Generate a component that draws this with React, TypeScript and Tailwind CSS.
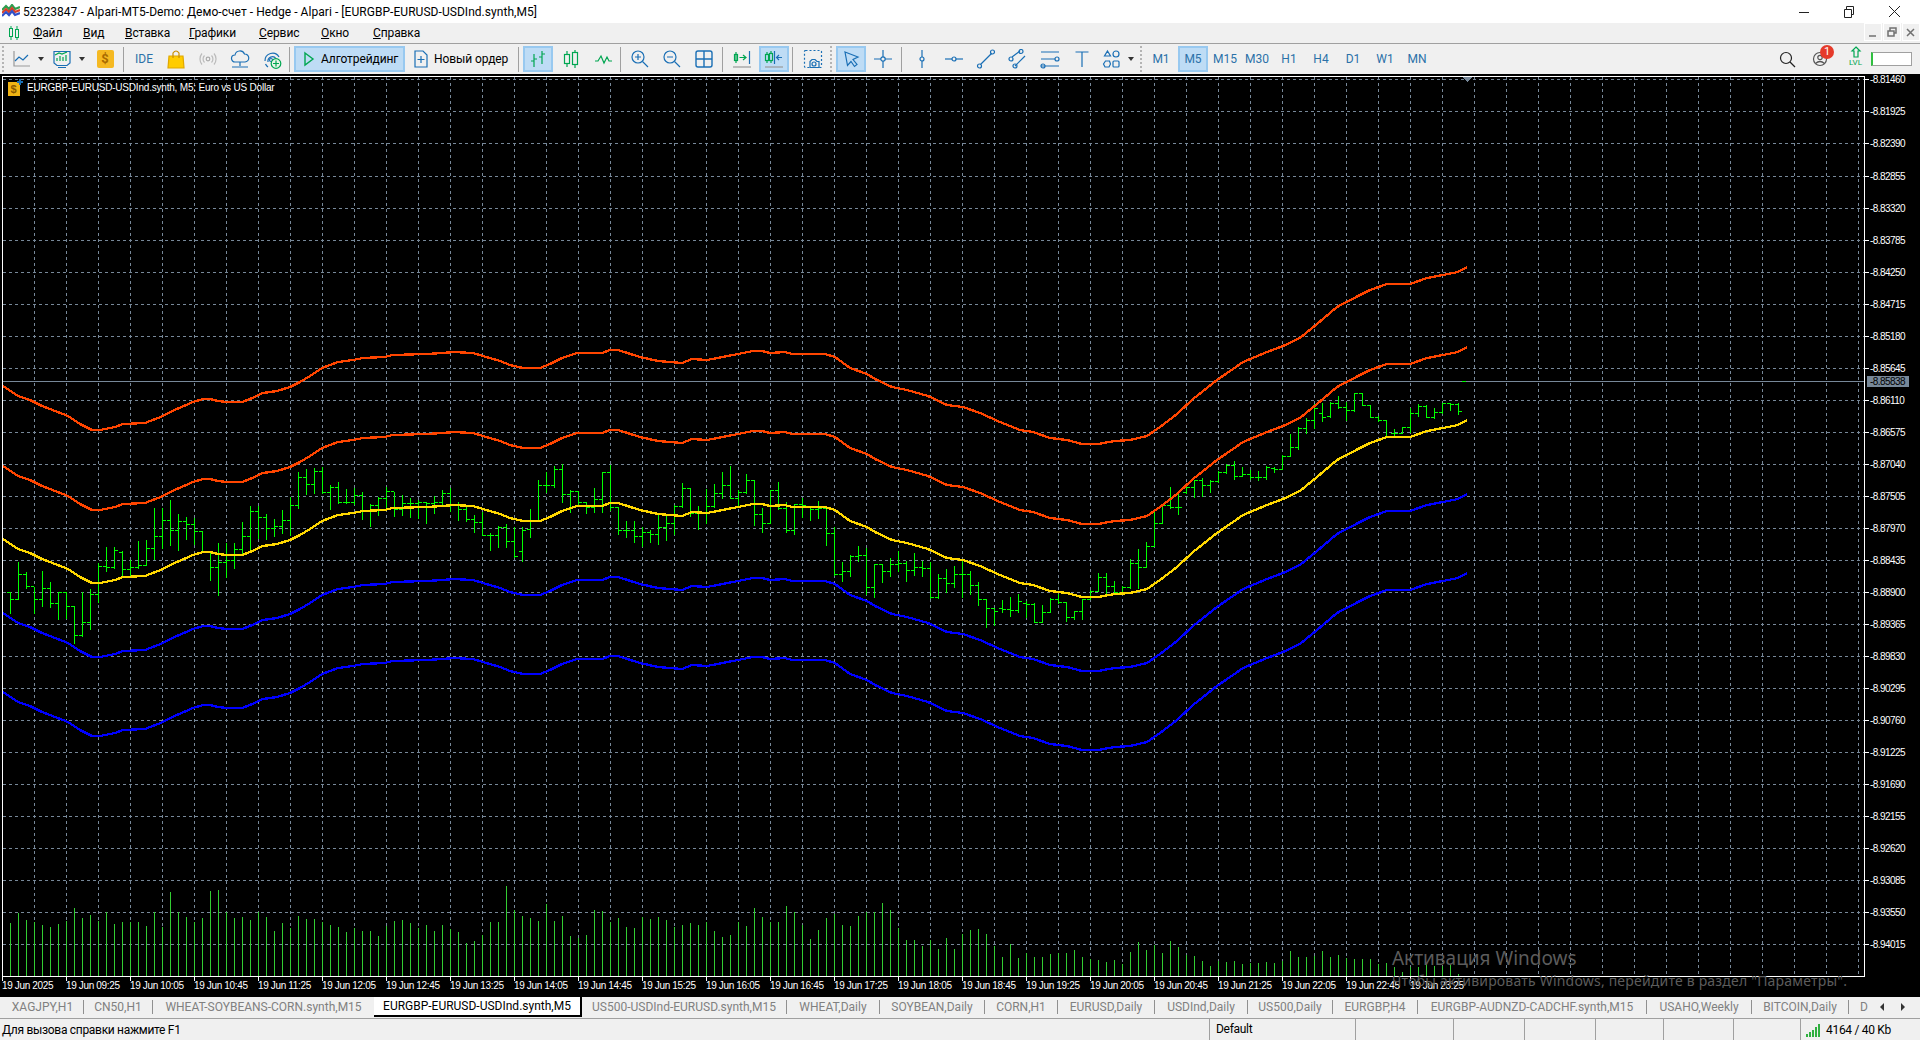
import type { ReactNode } from "react";

// y0 + raw/3: values were read off 3x crops of the chart
type Row = [number, number, number, number];
const seg = (y0: number, rows: Row[]) => rows.map((r) => r.map((v) => y0 + v / 3));

const BARS = [
  ...seg(360, [
    [697, 758, 697, 718], [606, 718, 718, 642], [636, 685, 642, 678], [680, 760, 678, 718], [633, 737, 718, 685],
    [666, 740, 685, 730], [695, 778, 730, 695], [695, 775, 695, 738], [738, 850, 738, 826], [697, 828, 826, 786],
    [688, 808, 786, 703], [610, 725, 703, 617], [561, 632, 617, 622], [561, 623, 622, 570], [574, 650, 577, 627],
    [601, 648, 627, 622], [543, 625, 622, 614], [541, 616, 614, 565], [444, 598, 565, 528], [445, 565, 528, 481],
    [420, 556, 481, 510], [462, 569, 510, 484], [471, 538, 484, 493], [474, 551, 493, 513], [513, 575, 513, 575],
    [575, 660, 575, 622], [549, 705, 622, 605], [548, 650, 605, 600], [549, 624, 600, 568], [487, 582, 568, 528],
    [437, 571, 528, 452], [438, 535, 452, 470], [462, 537, 470, 503], [477, 528, 503, 497], [450, 518, 497, 481],
    [410, 525, 481, 434], [335, 444, 434, 350], [327, 403, 350, 372], [325, 400, 372, 332], [322, 400, 332, 397],
    [376, 447, 397, 381], [366, 430, 381, 427], [388, 430, 427, 425], [385, 432, 425, 405], [397, 476, 405, 451],
    [433, 498, 451, 436], [412, 465, 436, 415], [380, 445, 415, 394], [395, 467, 394, 448], [405, 465, 448, 430],
    [414, 471, 430, 429], [421, 475, 429, 425], [425, 489, 425, 430], [408, 459, 430, 426], [391, 437, 426, 398],
    [384, 452, 398, 432], [427, 480, 432, 448], [436, 484, 448, 478], [465, 516, 478, 487], [456, 526, 487, 525],
    [518, 570, 525, 525], [498, 560, 525, 500],
  ]),
  ...seg(330, [
    [582, 650, 590, 632], [590, 680, 632, 677], [590, 693, 663, 600], [538, 620, 598, 571], [450, 572, 571, 464],
    [427, 487, 464, 464], [408, 472, 464, 418], [403, 515, 418, 492], [481, 545, 492, 484], [482, 525, 484, 515],
    [515, 550, 515, 530], [475, 545, 530, 508], [427, 545, 508, 427], [405, 540, 427, 532], [530, 612, 532, 600],
    [574, 620, 600, 600], [573, 635, 600, 617], [590, 648, 617, 605], [600, 635, 605, 613], [555, 643, 613, 592],
    [558, 630, 592, 580], [525, 612, 580, 528], [460, 530, 528, 473], [473, 558, 473, 548], [529, 598, 548, 548],
    [478, 578, 548, 528], [462, 530, 528, 490], [427, 503, 490, 465], [408, 505, 465, 505], [480, 530, 505, 485],
    [432, 490, 485, 450], [450, 585, 450, 552], [535, 607, 552, 580], [481, 580, 580, 481], [457, 537, 481, 533],
    [515, 605, 533, 600], [522, 613, 600, 523], [505, 560, 523, 525], [530, 570, 530, 538], [513, 565, 538, 535],
    [532, 645, 535, 608], [590, 735, 608, 733], [695, 752, 733, 724], [675, 737, 724, 677], [648, 692, 677, 674],
    [655, 793, 674, 771], [703, 800, 771, 703], [703, 755, 703, 724], [685, 738, 724, 702], [662, 723, 702, 700],
    [692, 752, 700, 720], [670, 735, 720, 710], [692, 737, 710, 715], [696, 803, 715, 800], [732, 803, 800, 745],
    [717, 787, 745, 760], [708, 772, 760, 733], [692, 800, 733, 733], [723, 793, 733, 765], [755, 825, 765, 808],
    [808, 890, 808, 834], [835, 885, 834, 842],
  ]),
  ...seg(250, [
    [1050, 1085, 1075, 1078], [1042, 1097, 1078, 1080], [1032, 1085, 1080, 1052], [1052, 1100, 1058, 1062],
    [1060, 1117, 1062, 1117], [1065, 1117, 1117, 1087], [1045, 1087, 1087, 1047], [1033, 1060, 1047, 1055],
    [1055, 1113, 1055, 1102], [1082, 1108, 1102, 1083], [1047, 1108, 1083, 1048], [1020, 1048, 1048, 1022],
    [970, 1022, 1022, 982], [970, 1030, 982, 1008], [992, 1030, 1008, 1025], [1008, 1030, 1025, 1010],
    [928, 1013, 1010, 940], [897, 1015, 940, 952], [877, 952, 952, 888], [785, 888, 888, 820], [765, 820, 820, 765],
    [712, 775, 765, 770], [725, 792, 770, 770], [710, 730, 725, 712], [690, 740, 712, 690], [685, 738, 690, 705],
    [690, 725, 705, 692], [663, 695, 692, 665], [642, 668, 665, 645], [633, 688, 645, 677], [652, 678, 677, 673],
    [660, 688, 673, 680], [662, 690, 680, 680], [647, 688, 680, 650], [650, 665, 655, 658], [615, 658, 658, 617],
    [552, 617, 617, 592], [532, 597, 592, 533], [505, 550, 533, 510], [462, 533, 510, 475], [458, 513, 490, 500],
    [455, 502, 498, 460], [438, 473, 460, 470], [455, 510, 470, 480], [430, 482, 480, 430], [430, 465, 430, 465],
    [465, 502, 465, 502], [498, 512, 502, 510], [511, 560, 510, 560], [537, 555, 550, 550], [530, 550, 550, 532],
    [475, 545, 532, 490], [462, 497, 490, 468], [465, 502, 468, 502], [475, 503, 502, 487], [460, 490, 487, 460],
    [460, 480, 460, 462], [460, 493, 462, 482],
  ]),
];

const VOL_A = [
  128, 98, 120, 125, 135, 140, 132, 122, 84, 113, 105, 122, 96, 132, 126, 126, 126, 138, 97, 140, 36, 96, 110, 126,
  113, 33, 30, 96, 113, 110, 120, 96, 110, 153, 129, 144, 108, 117, 117, 126, 135, 141, 156, 144, 153, 153, 168, 138,
  123, 120, 129, 144, 135, 153, 135, 147, 156, 190, 184, 165, 126, 126, 18, 90, 108, 114, 123, 72, 123, 108, 168, 174,
  165, 90, 93, 126, 114, 141, 144, 111, 117, 111, 120, 141, 135, 130, 135,
];
const VOL_B = [
  127, 152, 170, 165, 125, 137, 84, 110, 125, 125, 78, 97, 135, 177, 150, 113, 102, 135, 138, 108, 97, 96, 68, 90, 145,
  180, 180, 197, 180, 207, 175, 207, 162, 150, 147, 162, 198, 232, 192, 235, 220, 232, 232, 222, 220, 218, 210, 232,
  238, 240, 245, 240, 252, 215, 187, 210, 195, 218, 182, 200, 225, 228, 242, 258, 244, 246, 244, 252, 250, 250, 246,
  248, 244, 212, 232, 232, 228, 212, 232, 226, 235, 236, 238, 236, 252, 248, 262, 275, 262, 260, 250, 258, 258, 255,
  282,
];

// middle line of the envelopes, the other four are constant offsets from it
const MID: [number, number][] = [
  [3, 539], [18, 549], [30, 553], [42, 559], [55, 564], [68, 569], [80, 577], [92, 583], [100, 583], [115, 580],
  [123, 577], [145, 576], [163, 569], [170, 565], [193, 555], [203, 552], [210, 552], [218, 554], [227, 555],
  [242, 555], [250, 552], [263, 546], [277, 544], [290, 540], [300, 535], [310, 529], [322, 521], [338, 515],
  [353, 513], [363, 511], [385, 510], [392, 508], [427, 507], [443, 506], [453, 505], [473, 506], [483, 509],
  [500, 514], [510, 518], [523, 521], [540, 521], [550, 517], [562, 511], [577, 506], [602, 506], [610, 503],
  [618, 503], [640, 510], [658, 514], [682, 516], [692, 512], [707, 513], [733, 508], [753, 504], [762, 504],
  [770, 506], [785, 505], [792, 507], [825, 507], [835, 510], [850, 521], [867, 527], [875, 532], [892, 540],
  [907, 543], [928, 549], [947, 558], [963, 560], [980, 566], [1000, 575], [1020, 583], [1033, 585], [1050, 591],
  [1067, 593], [1082, 597], [1098, 597], [1115, 594], [1130, 593], [1147, 589], [1160, 580], [1177, 567], [1193, 552],
  [1217, 533], [1233, 522], [1243, 515], [1267, 505], [1283, 499], [1300, 491], [1317, 477], [1337, 460], [1358, 449],
  [1370, 443], [1387, 437], [1410, 437], [1427, 431], [1443, 428], [1458, 425], [1467, 420],
];

const LINES = [
  { off: -153, color: "#ff4500" },
  { off: -73, color: "#ff4500" },
  { off: 0, color: "#ffd700" },
  { off: 74, color: "#0000ff" },
  { off: 153, color: "#0000ff" },
];

const GRID_Y = [
  79, 111, 143, 176, 208, 240, 272, 304, 336, 368, 400, 432, 464, 496, 528, 560, 592, 624, 656, 688, 720, 752, 784, 816,
  848, 880, 912, 944,
];
const PRICES = [
  "8.81460", "8.81925", "8.82390", "8.82855", "8.83320", "8.83785", "8.84250", "8.84715", "8.85180", "8.85645",
  "8.86110", "8.86575", "8.87040", "8.87505", "8.87970", "8.88435", "8.88900", "8.89365", "8.89830", "8.90295",
  "8.90760", "8.91225", "8.91690", "8.92155", "8.92620", "8.93085", "8.93550", "8.94015",
];
const TIMES = [
  "2025", "09:25", "10:05", "10:45", "11:25", "12:05", "12:45", "13:25", "14:05", "14:45", "15:25", "16:05", "16:45",
  "17:25", "18:05", "18:45", "19:25", "20:05", "20:45", "21:25", "22:05", "22:45", "23:25",
];

const TABS = [
  { name: "XAGJPY,H1", w: "w-[82px]" },
  { name: "CN50,H1", w: "w-[69px]" },
  { name: "WHEAT-SOYBEANS-CORN.synth,M15", w: "w-[221px]" },
  { name: "EURGBP-EURUSD-USDInd.synth,M5", w: "w-[208px]", active: true },
  { name: "US500-USDInd-EURUSD.synth,M15", w: "w-[205px]" },
  { name: "WHEAT,Daily", w: "w-[93px]" },
  { name: "SOYBEAN,Daily", w: "w-[105px]" },
  { name: "CORN,H1", w: "w-[73px]" },
  { name: "EURUSD,Daily", w: "w-[97px]" },
  { name: "USDInd,Daily", w: "w-[93px]" },
  { name: "US500,Daily", w: "w-[85px]" },
  { name: "EURGBP,H4", w: "w-[85px]" },
  { name: "EURGBP-AUDNZD-CADCHF.synth,M15", w: "w-[229px]" },
  { name: "USAHO,Weekly", w: "w-[105px]" },
  { name: "BITCOIN,Daily", w: "w-[96px]" },
];

function Chart() {
  const bars = BARS.map((b, i) => {
    const x = 10 + 8 * i;
    const [h, l, o, c] = b.map(Math.round);
    return `M${x + 0.5} ${h}V${l + 1}M${x - 3} ${o + 0.5}H${x}M${x + 1} ${c + 0.5}H${x + 4}`;
  }).join("");
  const vols = [...VOL_A.map((t, i) => [i, t]), ...VOL_B.map((t, i) => [i + 87, t])]
    .map(([k, t]) => `M${10 + 8 * k + 0.5} ${Math.round(880 + t / 3)}V976`)
    .join("");

  return (
    <svg className="block" width={1920} height={923} viewBox="0 74 1920 923" shapeRendering="crispEdges">
      {/* grid */}
      <g stroke="#778899" strokeDasharray="3 3">
        {GRID_Y.map((y) => (
          <line key={y} x1={3} x2={1864} y1={y + 0.5} y2={y + 0.5} />
        ))}
        {Array.from({ length: 58 }, (_, i) => (
          <line key={i} x1={34.5 + 32 * i} x2={34.5 + 32 * i} y1={77} y2={976} />
        ))}
      </g>
      <path d={vols} stroke="#32cd32" fill="none" />
      <path d={bars} stroke="#00ff00" fill="none" />
      <line x1={3} x2={1864} y1={381.5} y2={381.5} stroke="#778899" />
      <line x1={1462} x2={1466} y1={381.5} y2={381.5} stroke="#00ff00" />
      {LINES.map((l) => (
        <polyline
          key={l.off}
          points={MID.map(([x, y]) => `${x},${y + l.off}`).join(" ")}
          fill="none"
          stroke={l.color}
          strokeWidth={2.3}
        />
      ))}
      <polygon points="1462,77 1472,77 1467,82" fill="#778899" />

      {/* frame and axes */}
      <path d="M2.5 76V977M2 76.5H1865M1864.5 76V977M2 976.5H1865" stroke="#fff" fill="none" />
      <g stroke="#fff">
        {GRID_Y.map((y) => (
          <line key={y} x1={1865} x2={1869} y1={y + 0.5} y2={y + 0.5} />
        ))}
        {TIMES.map((_, i) => (
          <line key={i} x1={2.5 + 64 * i} x2={2.5 + 64 * i} y1={977} y2={981} />
        ))}
      </g>
      <g fill="#fff" fontFamily="Liberation Sans, sans-serif" fontSize={10} shapeRendering="auto">
        {PRICES.map((p, i) => (
          <text key={p} x={1870} y={GRID_Y[i] + 4} letterSpacing={-0.55}>
            {"-" + p}
          </text>
        ))}
        {TIMES.map((t, i) => (
          <text key={t} x={2 + 64 * i} y={989} letterSpacing={-0.35}>
            {"19 Jun " + t}
          </text>
        ))}
        <text x={27} y={91} letterSpacing={-0.2}>
          EURGBP-EURUSD-USDInd.synth, M5: Euro vs US Dollar
        </text>
      </g>
      <rect x={1867} y={376} width={42} height={11} fill="#778899" />
      <text x={1870} y={385} fontFamily="Liberation Sans, sans-serif" fontSize={10} letterSpacing={-0.55} shapeRendering="auto">
        -8.85838
      </text>

      {/* chart window icon */}
      <rect x={8} y={82} width={12} height={14} rx={1} fill="#f0b414" />
      <text x={10.5} y={93} fontSize={11} fontFamily="Liberation Sans, sans-serif" fontWeight={700} fill="#8a5a00" shapeRendering="auto">
        $
      </text>
      <path d="M20 79v6M17 82h6" stroke="#1a6fb5" strokeWidth={1.5} />
    </svg>
  );
}

const Ico = ({ children, w = 20, h = 20 }: { children: ReactNode; w?: number; h?: number }) => (
  <svg width={w} height={h} viewBox={`0 0 ${w} ${h}`} fill="none" stroke="#1a6fb5" strokeWidth={1.2}>
    {children}
  </svg>
);

const Slot = ({
  children,
  active,
  w = "w-[32px]",
  className = "",
}: {
  children?: ReactNode;
  active?: boolean;
  w?: string;
  className?: string;
}) => (
  <div className={`flex h-[26px] shrink-0 items-center justify-center ${w} ${className}`}>
    {active ? (
      <div className="flex h-[26px] w-[30px] items-center justify-center border-2 border-[#98c9f0] bg-[#bedcf5]">{children}</div>
    ) : (
      children
    )}
  </div>
);

const Sep = ({ className = "" }: { className?: string }) => <div className={`h-[25px] w-px shrink-0 bg-[#a0a0a0] ${className}`} />;
const Grip = ({ className = "" }: { className?: string }) => (
  <div className={`h-[26px] w-[3px] shrink-0 border-l-2 border-dotted border-[#b4b4b4] ${className}`} />
);
const Caret = ({ className = "w-[8px]" }: { className?: string }) => (
  <div className={`flex shrink-0 justify-center ${className}`}>
    <div className="h-0 w-0 border-x-[3.5px] border-t-[4px] border-x-transparent border-t-[#333]" />
  </div>
);
const Tf = ({ label, active }: { label: string; active?: boolean }) => (
  <Slot active={active}>
    <span className="text-[12px] text-[#2b71a8]">{label}</span>
  </Slot>
);

function Toolbar() {
  return (
    <div className="flex h-[30px] items-center bg-[#f0f0f0] pl-[2px]">
      <Grip />
      <Slot w="w-[30px]" className="ml-[2px]">
        <Ico>
          <path d="M2 2v15h16" stroke="#999" />
          <path d="M3 12l4-4 4 3 5-5" />
        </Ico>
      </Slot>
      <Caret />
      <Slot w="w-[30px]" className="ml-[2px]">
        <Ico>
          <path d="M2 2.5h16v11.5l-3 2.5H5l-3-2.5zM6 18.5h8" />
          <path d="M5 12V9M8 12V7M11 12V8M14 12V6M3 6l4-2 3 1 5-2" stroke="#00a651" />
        </Ico>
      </Slot>
      <Caret className="w-[9px]" />
      <Slot className="ml-[3px]">
        <div className="flex h-[18px] w-[17px] items-center justify-center rounded-[2px] bg-[#f5b922] text-[13px] font-bold text-[#a86a00]">$</div>
      </Slot>
      <Sep className="ml-[2px]" />
      <Slot className="ml-[4px]">
        <span className="text-[12px] text-[#2b71a8]">IDE</span>
      </Slot>
      <Slot>
        <Ico>
          <path d="M3 7h14l1 12H2z" fill="#ffcc00" stroke="#e0a800" />
          <path d="M7 9V4q3-4 6 0v5" stroke="#c98f00" />
        </Ico>
      </Slot>
      <Slot>
        <Ico>
          <circle cx={10} cy={10} r={1.8} stroke="#aaa" />
          <path d="M6.5 6.5a5 5 0 0 0 0 7M13.5 6.5a5 5 0 0 1 0 7M4 4.5a8.5 8.5 0 0 0 0 11M16 4.5a8.5 8.5 0 0 1 0 11" stroke="#bbb" />
        </Ico>
      </Slot>
      <Slot>
        <Ico>
          <path d="M5 13a3.5 3.5 0 0 1 0-7 5 5 0 0 1 9.500-1 4 4 0 0 1 .5 8zM10 13v4M2 18h16" />
        </Ico>
      </Slot>
      <Slot>
        <Ico>
          <path d="M3 12a7.500 7.500 0 0 1 14-4M6 13a4.500 4.500 0 0 1 8-3.500M3.500 15q1 2 2.500 3" />
          <circle cx={9} cy={11} r={1.5} />
          <circle cx={14} cy={14.5} r={4.8} fill="#e8f5e8" stroke="#00a651" />
          <path d="M14 11.500v6M11 14.500h6" stroke="#00a651" />
        </Ico>
      </Slot>
      <Sep className="ml-px" />
      <div className="ml-[4px] flex h-[26px] w-[111px] shrink-0 items-center border-2 border-[#98c9f0] bg-[#bedcf5] pl-[7px]">
        <Ico w={12} h={16}>
          <path d="M2 2l8 6-8 6z" stroke="#00a651" strokeWidth={1.4} />
        </Ico>
        <span className="ml-[6px] text-[12px] tracking-[-0.1px] text-black">Алготрейдинг</span>
      </div>
      <div className="ml-[2px] flex h-[26px] w-[108px] shrink-0 items-center pl-[7px]">
        <Ico w={14} h={18}>
          <path d="M1 1h8l4 4v12H1z" />
          <path d="M7 6v7M3.500 9.500h7" />
        </Ico>
        <span className="ml-[6px] text-[12px] tracking-[-0.1px] text-black">Новый ордер</span>
      </div>
      <Sep className="ml-[3px]" />
      <Slot active w="w-[30px]" className="ml-[4px]">
        <Ico>
          <path d="M6 5v13M3 12h3M6 10h3M14 2v13M11 8h3M14 5h3" stroke="#00a651" />
        </Ico>
      </Slot>
      <Slot className="ml-[2px]">
        <Ico>
          <path d="M6 2v16M14 1v18" stroke="#00a651" />
          <rect x={3.500} y={5.500} width={5} height={9} fill="#f0f0f0" stroke="#00a651" />
          <rect x={11.500} y={3.500} width={5} height={12} fill="#f0f0f0" stroke="#00a651" />
        </Ico>
      </Slot>
      <Slot>
        <Ico>
          <path d="M2 12h3l3-5 3 7 3-6 2 4h3" stroke="#00a651" />
        </Ico>
      </Slot>
      <Sep className="ml-px" />
      <Slot className="ml-[3px]">
        <Ico>
          <circle cx={8} cy={8} r={6} />
          <path d="M12.500 12.500l5.500 5.500M5 8h6M8 5v6" />
        </Ico>
      </Slot>
      <Slot>
        <Ico>
          <circle cx={8} cy={8} r={6} />
          <path d="M12.500 12.500l5.500 5.500M5 8h6" />
        </Ico>
      </Slot>
      <Slot>
        <Ico>
          <rect x={2} y={2} width={16} height={16} rx={2} strokeWidth={1.4} />
          <path d="M10 2v16M2 10h16" strokeWidth={1.4} />
        </Ico>
      </Slot>
      <Sep className="ml-[2px]" />
      <Slot className="ml-[3px]">
        <Ico>
          <path d="M4 3v11" stroke="#00a651" />
          <rect x={2.500} y={5.500} width={3} height={6} stroke="#00a651" />
          <path d="M7.500 8.500h6M11 6l3 2.500-3 2.500" stroke="#00a651" />
          <path d="M17.500 2v13" />
          <path d="M1 18h18" stroke="#999" />
        </Ico>
      </Slot>
      <Slot active>
        <Ico>
          <path d="M3 3v11M7 2v12" stroke="#00a651" />
          <rect x={1.500} y={5.500} width={3} height={6} stroke="#00a651" fill="#bedcf5" />
          <rect x={5.500} y={4.500} width={3} height={7} stroke="#00a651" fill="#bedcf5" />
          <path d="M10.500 2v13M18 8.500h-5M15 6l-2.500 2.500L15 11" />
          <path d="M1 18h18" stroke="#999" />
        </Ico>
      </Slot>
      <Sep className="ml-[2px]" />
      <Slot className="ml-[4px]">
        <Ico>
          <rect x={1.500} y={1.500} width={17} height={17} rx={1} strokeDasharray="2 2" />
          <path d="M7 18.500v-6l2-2h3l2 2h2v6z" fill="#f0f0f0" />
          <circle cx={11} cy={15} r={2} />
        </Ico>
      </Slot>
      <Grip className="ml-px" />
      <Slot active className="ml-[2px]">
        <Ico>
          <path d="M4 3l13 5-5 2.500 4 5-2.500 2-3.500-5-3.500 4z" />
        </Ico>
      </Slot>
      <Slot>
        <Ico>
          <path d="M10 1v18M1 10h18" />
          <circle cx={10} cy={10} r={2.200} fill="#f0f0f0" />
        </Ico>
      </Slot>
      <Sep className="ml-[2px]" />
      <Slot className="ml-[4px]">
        <Ico>
          <path d="M10 1v18" />
          <circle cx={10} cy={10} r={2} fill="#f0f0f0" />
        </Ico>
      </Slot>
      <Slot>
        <Ico>
          <path d="M1 10h18" />
          <circle cx={10} cy={10} r={2} fill="#f0f0f0" />
        </Ico>
      </Slot>
      <Slot>
        <Ico>
          <path d="M4.500 15.500l11-11" />
          <circle cx={3.500} cy={17} r={2} />
          <circle cx={16.500} cy={3} r={2} />
        </Ico>
      </Slot>
      <Slot>
        <Ico>
          <path d="M4 8l8-6M7 17l10-10" />
          <circle cx={3} cy={10} r={2} />
          <circle cx={13} cy={2.500} r={2} />
          <circle cx={7} cy={17} r={2} />
        </Ico>
      </Slot>
      <Slot>
        <Ico>
          <path d="M1 3h18M1 10h14M1 17h18" />
          <circle cx={17} cy={10} r={2} />
          <circle cx={3} cy={17} r={2} />
        </Ico>
      </Slot>
      <Slot>
        <Ico>
          <path d="M3.500 3h13M10 3v15" />
        </Ico>
      </Slot>
      <Slot w="w-[28px]">
        <Ico>
          <path d="M5.500 2l3 5h-6zM3.500 12h4l1 3-1.500 3H3l-1.500-3z" />
          <circle cx={14} cy={5} r={3} />
          <rect x={11} y={12} width={6} height={6} rx={1} />
        </Ico>
      </Slot>
      <Caret className="w-[9px]" />
      <Grip className="ml-[5px]" />
      <div className="ml-[2px] flex">
        {["M1", "M5", "M15", "M30", "H1", "H4", "D1", "W1", "MN"].map((t) => (
          <Tf key={t} label={t} active={t === "M5"} />
        ))}
      </div>
      <div className="ml-auto flex items-center pr-[8px]">
        <Slot>
          <Ico w={18} h={18}>
            <circle cx={8} cy={8} r={5.500} stroke="#222" />
            <path d="M12 12l5 5" stroke="#222" />
          </Ico>
        </Slot>
        <Slot className="relative ml-[2px]">
          <Ico w={18} h={18}>
            <circle cx={8} cy={9} r={6.500} stroke="#555" />
            <circle cx={8} cy={7.500} r={2.200} stroke="#555" />
            <path d="M3.500 13.500q4.500-4 9 0" stroke="#555" />
          </Ico>
          <span className="absolute left-[15px] top-[-1px] flex h-[14px] w-[14px] items-center justify-center rounded-full bg-[#e53a2a] text-[11px] text-white">1</span>
        </Slot>
        <div className="ml-[3px] flex h-[26px] w-[31px] shrink-0 flex-col items-center">
          <Ico w={14} h={12}>
            <path d="M7 1l4 4H9v6H5V5H3z" stroke="#00a651" />
          </Ico>
          <span className="text-[8px] leading-[9px] text-[#00a651]">LVL</span>
        </div>
        <div className="h-[14px] w-[41px] border border-[#a0a0a0] border-l-2 border-l-[#30c040] bg-white" />
      </div>
    </div>
  );
}

function TabBar() {
  return (
    <div className="flex h-[22px] items-start overflow-hidden border-b border-[#a0a0a0] bg-[#f0f0f0] pl-[2px] text-[12px] text-[#808080]">
      {TABS.map((t, i) =>
        t.active ? (
          <div key={t.name} className={`-mt-px flex h-[21px] shrink-0 items-center justify-center whitespace-nowrap border-b-2 border-r-2 border-black bg-white text-black ${t.w}`}>
            {t.name}
          </div>
        ) : (
          <div
            key={t.name}
            className={`mt-[3px] flex h-[14px] shrink-0 items-center justify-center whitespace-nowrap ${i === 2 || i === 14 ? "" : "border-r border-[#909090]"} ${t.w}`}
          >
            {t.name}
          </div>
        ),
      )}
      <div className="mt-[3px] flex h-[14px] w-[26px] shrink-0 items-center border-l border-[#909090] pl-[11px]">D</div>
      <div className="mt-[6px] ml-[6px] h-0 w-0 border-y-[4px] border-r-[4px] border-y-transparent border-r-[#333]" />
      <div className="mt-[6px] ml-[17px] h-0 w-0 border-y-[4px] border-l-[4px] border-y-transparent border-l-[#333]" />
    </div>
  );
}

const STATUS_CELLS = ["w-[98px]", "w-[71px]", "w-[71px]", "w-[68px]", "w-[70px]", "w-[67px]"];

function StatusBar() {
  return (
    <div className="flex h-[21px] items-center bg-[#f0f0f0] text-[12px] tracking-[-0.3px] text-black">
      <div className="w-[1209px] shrink-0 pl-[2px]">Для вызова справки нажмите F1</div>
      <div className="h-[21px] w-[146px] shrink-0 border-l border-[#a0a0a0] pl-[6px] leading-[21px]">Default</div>
      {STATUS_CELLS.map((w, i) => (
        <div key={i} className={`h-[21px] shrink-0 border-l border-[#a0a0a0] ${w}`} />
      ))}
      <div className="flex h-[21px] flex-1 items-center border-l border-[#a0a0a0] pl-[5px]">
        <div className="flex h-[14px] items-end gap-px">
          <div className="h-[3px] w-[2px] bg-[#30b040]" />
          <div className="h-[5px] w-[2px] bg-[#30b040]" />
          <div className="h-[7px] w-[2px] bg-[#30b040]" />
          <div className="h-[10px] w-[2px] bg-[#30b040]" />
          <div className="h-[13px] w-[2px] bg-[#30b040]" />
        </div>
        <span className="ml-[6px] whitespace-nowrap">4164 / 40 Kb</span>
      </div>
    </div>
  );
}

export default function App() {
  const menu = ["Файл", "Вид", "Вставка", "Графики", "Сервис", "Окно", "Справка"];
  const gaps = ["w-[50px]", "w-[42px]", "w-[64px]", "w-[70px]", "w-[62px]", "w-[52px]", "w-[60px]"];

  return (
    <div className="flex h-[1040px] w-[1920px] flex-col overflow-hidden bg-black font-['Roboto',sans-serif]">
      {/* title bar */}
      <div className="flex h-[23px] items-center bg-white text-[12px] text-black">
        <svg className="ml-[2px]" width={18} height={15} viewBox="0 0 18 15" fill="none" strokeWidth={2.2}>
          <path d="M0 6l4-4 3 3 3-4 3 4 5-2" stroke="#2e9e4f" />
          <path d="M0 9l4-4 3 3 3-4 3 4 5-2" stroke="#d8402a" />
          <path d="M0 12l4-4 3 3 3-4 3 4 5-2" stroke="#3050c8" />
        </svg>
        <span className="ml-[3px] tracking-[0.05px]">52323847 - Alpari-MT5-Demo: Демо-счет - Hedge - Alpari - [EURGBP-EURUSD-USDInd.synth,M5]</span>
        <div className="ml-auto flex items-center pr-[19px]">
          <svg width={102} height={16} viewBox="0 0 102 16" fill="none" stroke="#222">
            <path d="M0 8.500h10" />
            <path d="M45.500 5.500h7v8h-7zM47.500 5.500v-3h7v8h-2" />
            <path d="M90 2l11 11M101 2L90 13" />
          </svg>
        </div>
      </div>

      {/* menu */}
      <div className="flex h-[21px] items-center border-b border-[#a0a0a0] bg-[#f0f0f0] text-[12px] tracking-[-0.1px] text-black">
        <svg className="ml-[8px] mr-[13px]" width={12} height={16} viewBox="0 0 12 16" fill="none" stroke="#00a651">
          <path d="M3 1v14M9 1v14" />
          <rect x={1.500} y={3.500} width={3} height={8} fill="#f0f0f0" />
          <rect x={7.500} y={4.500} width={3} height={8} fill="#f0f0f0" />
        </svg>
        {menu.map((m, i) => (
          <div key={m} className={`shrink-0 ${gaps[i]}`}>
            <u>{m[0]}</u>
            {m.slice(1)}
          </div>
        ))}
        <div className="ml-auto flex gap-px self-start">
          {["M4 12h7", "M4 7h6v5H4zM6 7V4h6v5h-2", "M4 5l7 7M11 5l-7 7"].map((d) => (
            <div key={d} className="flex h-[18px] w-[18px] items-center justify-center border border-white">
              <svg width={16} height={16} viewBox="0 0 16 16" fill="none" stroke="#707070" strokeWidth={1.500}>
                <path d={d} />
              </svg>
            </div>
          ))}
        </div>
      </div>

      <Toolbar />

      {/* chart window */}
      <div className="relative h-[923px] bg-black">
        <Chart />
        <div className="absolute left-[1392px] top-[870px] whitespace-nowrap text-[#5c5c5c] font-['Noto_Sans',sans-serif]">
          <div className="text-[19px] leading-[28px]">Активация Windows</div>
          <div className="mt-[-1px] text-[14px] leading-[20px] tracking-[0.2px]">Чтобы активировать Windows, перейдите в раздел "Параметры".</div>
        </div>
      </div>

      <TabBar />
      <StatusBar />
    </div>
  );
}
